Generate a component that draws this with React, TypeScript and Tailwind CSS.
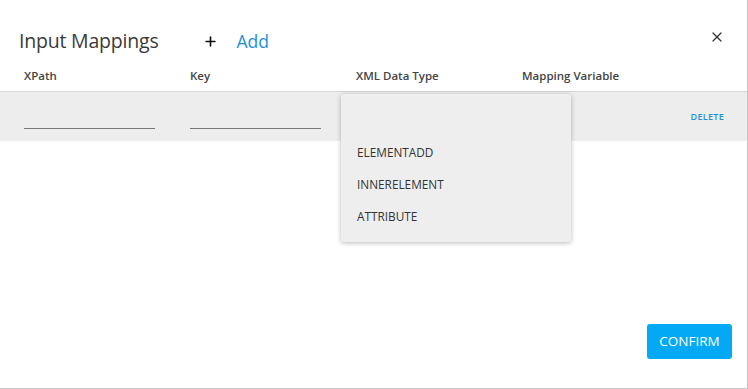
import { X, Plus } from 'lucide-react'

const columns = ['XPath', 'Key', 'XML Data Type', 'Mapping Variable']
const options = ['ELEMENTADD', 'INNERELEMENT', 'ATTRIBUTE']

export default function App() {
  return (
    <div
      className="relative w-[748px] h-[389px] bg-white border-r border-b border-[#c6c6c6] text-[#333]"
      style={{ fontFamily: '"Open Sans", "Noto Sans", sans-serif' }}
    >
      <div className="flex items-center h-[60px] pt-[22px] pl-[19px] pr-[22px]">
        <h2 className="text-[19.5px] text-[#3a3a3a] tracking-[-0.2px]">Input Mappings</h2>
        <button className="ml-[44px] flex items-center text-[#111]">
          <Plus size={15} strokeWidth={2.6} />
        </button>
        <button className="ml-[19px] text-[17.5px] text-[#1e90d6]">Add</button>
        <button className="ml-auto mb-[8px] text-[#333]">
          <X size={16} strokeWidth={1.9} />
        </button>
      </div>

      <div className="grid grid-cols-[166px_166px_166px_166px] pl-[24px] h-[31px] items-center">
        {columns.map((c) => (
          <div key={c} className="text-[11.5px] font-semibold text-[#444]">
            {c}
          </div>
        ))}
      </div>

      <div className="flex items-end h-[50px] bg-[#ededed] border-t border-[#d4d4d4] pl-[24px] pr-[23px]">
        <div className="w-[131px] border-b border-[#777] mb-[12px]" />
        <div className="w-[131px] ml-[35px] border-b border-[#777] mb-[12px]" />
        <button className="ml-auto self-center text-[9px] font-semibold text-[#1e90d6] tracking-[0.3px]">
          DELETE
        </button>
      </div>

      <div className="absolute left-[341px] top-[94px] w-[230px] h-[148px] bg-[#eeeeee] rounded-[3px] shadow-[0_1px_5px_rgba(0,0,0,0.28)]">
        <div className="h-[43px]" />
        {options.map((o) => (
          <div key={o} className="h-[32px] flex items-center pl-[16px] text-[11.8px] font-medium text-[#333]">
            {o}
          </div>
        ))}
      </div>

      <button className="absolute left-[647px] top-[324px] w-[85px] h-[35px] rounded-[3px] bg-[#03a9f4] text-white text-[13.5px]">
        CONFIRM
      </button>
    </div>
  )
}
